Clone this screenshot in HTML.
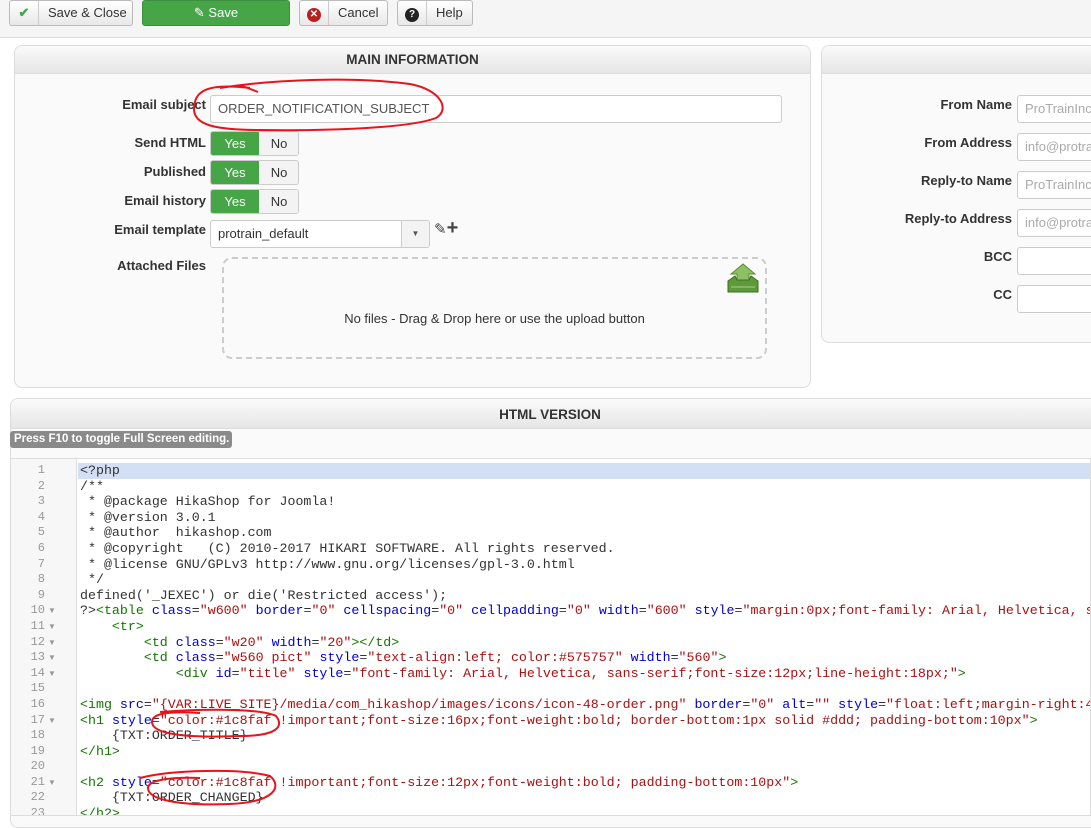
<!DOCTYPE html>
<html><head><meta charset="utf-8"><style>
*{box-sizing:border-box}
body{margin:0;width:1091px;height:816px;overflow:hidden;background:#fff;font-family:"Liberation Sans",Arial,sans-serif;font-size:13px;color:#333;position:relative}
.tb{position:absolute;left:0;top:0;width:1091px;height:38px;background:#f5f5f5;border-bottom:1px solid #ddd}
.btn{position:absolute;top:0;height:26px;border:1px solid #bbb;border-radius:3px;background:linear-gradient(#fff,#e8e8e8);font-size:13px;line-height:24px;color:#333;white-space:nowrap;overflow:hidden}
.btn .ic{display:inline-block;width:29px;height:24px;border-right:1px solid #ccc;text-align:center;vertical-align:top;font-weight:bold}
.btn span.t{padding:0 9px 0 9px}
.panel{position:absolute;background:#fafafa;border:1px solid #ddd;border-radius:8px;overflow:hidden}
.ph{height:28px;background:linear-gradient(#fafafa,#e6e6e6);border-bottom:1px solid #ddd;text-align:center;font-weight:bold;font-size:13.5px;line-height:28px;color:#333}
.lbl{position:absolute;font-weight:bold;font-size:13px;color:#333;text-align:right;white-space:nowrap}
.inp{position:absolute;height:28px;border:1px solid #ccc;border-radius:3px;background:#fff;font-size:13px;line-height:26px;padding-left:7px;color:#555;white-space:nowrap;overflow:hidden}
.yn{position:absolute;left:210px;width:89px;height:25px;border:1px solid #ccc;border-radius:3px;overflow:hidden;font-size:13px;line-height:23px}
.yn .y{position:absolute;left:0;top:0;width:48px;height:24px;background:#46a546;color:#fff;text-align:center}
.yn .n{position:absolute;left:48px;top:0;width:40px;height:24px;background:#f3f3f3;color:#333;text-align:center}
.code{position:absolute;left:10px;top:458px;width:1081px;height:358px;background:#fff;border:1px solid #ddd;overflow:hidden}
.gut{position:absolute;left:0;top:0;width:66px;height:100%;background:#f7f7f7;border-right:1px solid #ddd}
.ln{position:absolute;left:0;width:34px;text-align:right;font-family:"Liberation Mono",monospace;font-size:12px;color:#999}
.fd{position:absolute;left:37px;font-size:8px;color:#999}
.cl{position:absolute;left:69px;white-space:pre;font-family:"Liberation Mono",monospace;font-size:13.3px;line-height:15.6px;color:#333}
.g{color:#170}.b{color:#00c}.r{color:#a11}
</style></head><body>
<div class="tb">
 <div class="btn" style="left:9px;width:124px"><span class="ic" style="color:#46a546">✔</span><span class="t">Save &amp; Close</span></div>
 <div class="btn" style="left:142px;width:148px;background:#46a546;border-color:#3d8f3d;color:#fff;text-align:center">✎ Save</div>
 <div class="btn" style="left:299px;width:89px"><span class="ic"><span style="display:inline-block;width:14px;height:14px;border-radius:7px;background:#b52020;color:#fff;font-size:10px;line-height:14px;margin-top:5px">✕</span></span><span class="t">Cancel</span></div>
 <div class="btn" style="left:397px;width:76px"><span class="ic"><span style="display:inline-block;width:14px;height:14px;border-radius:7px;background:#222;color:#fff;font-size:10px;line-height:14px;margin-top:5px">?</span></span><span class="t">Help</span></div>
</div>

<div class="panel" style="left:14px;top:45px;width:797px;height:343px">
 <div class="ph">MAIN INFORMATION</div>
</div>
<div class="lbl" style="left:60px;top:97px;width:146px">Email subject</div>
<div class="inp" style="left:210px;top:95px;width:572px">ORDER_NOTIFICATION_SUBJECT</div>
<div class="lbl" style="left:60px;top:135px;width:146px">Send HTML</div>
<div class="yn" style="top:131px"><div class="y">Yes</div><div class="n">No</div></div>
<div class="lbl" style="left:60px;top:164px;width:146px">Published</div>
<div class="yn" style="top:160px"><div class="y">Yes</div><div class="n">No</div></div>
<div class="lbl" style="left:60px;top:193px;width:146px">Email history</div>
<div class="yn" style="top:189px"><div class="y">Yes</div><div class="n">No</div></div>
<div class="lbl" style="left:60px;top:222px;width:146px">Email template</div>
<div class="inp" style="left:210px;top:220px;width:220px;color:#333">protrain_default<div style="position:absolute;right:0;top:0;width:28px;height:26px;border-left:1px solid #ccc;background:#f3f3f3;text-align:center;font-size:8px;color:#555">▼</div></div>
<div style="position:absolute;left:434px;top:220px;font-size:15px;color:#444">✎<b style="font-size:20px;line-height:16px">+</b></div>
<div class="lbl" style="left:60px;top:258px;width:146px">Attached Files</div>
<div style="position:absolute;left:222px;top:257px;width:545px;height:102px;border:2px dashed #ccc;border-radius:10px;text-align:center;line-height:120px;font-size:13px;color:#333">No files - Drag &amp; Drop here or use the upload button</div>
<svg style="position:absolute;left:727px;top:263px" width="33" height="32"><polygon points="16,1 28,11 22,11 22,17 10,17 10,11 4,11" fill="#8cc063" stroke="#5a8a35"/><path d="M1,18 L8,13 L10,17 L22,17 L24,13 L31,18 L31,29 L1,29Z" fill="#5f9a3a" stroke="#3f6e22"/><line x1="4" y1="24" x2="28" y2="24" stroke="#aad08a"/></svg>

<div class="panel" style="left:821px;top:45px;width:290px;height:298px">
 <div class="ph"></div>
</div>
<div class="lbl" style="left:850px;top:97px;width:162px">From Name</div>
<div class="inp" style="left:1017px;top:95px;width:90px;color:#aaa">ProTrainInc.</div>
<div class="lbl" style="left:850px;top:135px;width:162px">From Address</div>
<div class="inp" style="left:1017px;top:133px;width:90px;color:#aaa">info@protrain</div>
<div class="lbl" style="left:850px;top:173px;width:162px">Reply-to Name</div>
<div class="inp" style="left:1017px;top:171px;width:90px;color:#aaa">ProTrainInc.</div>
<div class="lbl" style="left:850px;top:211px;width:162px">Reply-to Address</div>
<div class="inp" style="left:1017px;top:209px;width:90px;color:#aaa">info@protrain</div>
<div class="lbl" style="left:850px;top:249px;width:162px">BCC</div>
<div class="inp" style="left:1017px;top:247px;width:90px"></div>
<div class="lbl" style="left:850px;top:287px;width:162px">CC</div>
<div class="inp" style="left:1017px;top:285px;width:90px"></div>

<div class="panel" style="left:10px;top:398px;width:1100px;height:430px">
 <div class="ph" style="height:30px;line-height:32px;padding-right:20px">HTML VERSION</div>
</div>
<div style="position:absolute;left:10px;top:431px;width:222px;height:17px;background:#8a8a8a;border-radius:3px;color:#fff;font-weight:bold;font-size:11.5px;line-height:17px;padding-left:4px;white-space:nowrap;overflow:hidden">Press F10 to toggle Full Screen editing.</div>

<div class="code">
 <div class="gut"></div>
 <div style="position:absolute;left:67px;top:4px;width:1020px;height:15.6px;background:#d2dff5"></div>
<div class="ln" style="top:4px;line-height:15.6px">1<br>2<br>3<br>4<br>5<br>6<br>7<br>8<br>9<br>10<br>11<br>12<br>13<br>14<br>15<br>16<br>17<br>18<br>19<br>20<br>21<br>22<br>23</div>
<div class="fd" style="top:4px;line-height:15.6px"><br><br><br><br><br><br><br><br><br>▼<br>▼<br>▼<br>▼<br>▼<br><br><br>▼<br><br><br><br>▼<br><br></div>
<div class="cl" style="top:4px">&lt;?php
/**
 * @package HikaShop for Joomla!
 * @version 3.0.1
 * @author  hikashop.com
 * @copyright   (C) 2010-2017 HIKARI SOFTWARE. All rights reserved.
 * @license GNU/GPLv3 http://www.gnu.org/licenses/gpl-3.0.html
 */
defined('_JEXEC') or die('Restricted access');
?&gt;<span class="g">&lt;table</span> <span class="b">class</span>=<span class="r">"w600"</span> <span class="b">border</span>=<span class="r">"0"</span> <span class="b">cellspacing</span>=<span class="r">"0"</span> <span class="b">cellpadding</span>=<span class="r">"0"</span> <span class="b">width</span>=<span class="r">"600"</span> <span class="b">style</span>=<span class="r">"margin:0px;font-family: Arial, Helvetica, sans-serif"</span>
    <span class="g">&lt;tr&gt;</span>
        <span class="g">&lt;td</span> <span class="b">class</span>=<span class="r">"w20"</span> <span class="b">width</span>=<span class="r">"20"</span><span class="g">&gt;&lt;/td&gt;</span>
        <span class="g">&lt;td</span> <span class="b">class</span>=<span class="r">"w560 pict"</span> <span class="b">style</span>=<span class="r">"text-align:left; color:#575757"</span> <span class="b">width</span>=<span class="r">"560"</span><span class="g">&gt;</span>
            <span class="g">&lt;div</span> <span class="b">id</span>=<span class="r">"title"</span> <span class="b">style</span>=<span class="r">"font-family: Arial, Helvetica, sans-serif;font-size:12px;line-height:18px;"</span><span class="g">&gt;</span>

<span class="g">&lt;img</span> <span class="b">src</span>=<span class="r">"{VAR:LIVE_SITE}/media/com_hikashop/images/icons/icon-48-order.png"</span> <span class="b">border</span>=<span class="r">"0"</span> <span class="b">alt</span>=<span class="r">""</span> <span class="b">style</span>=<span class="r">"float:left;margin-right:4px"</span>
<span class="g">&lt;h1</span> <span class="b">style</span>=<span class="r">"color:#1c8faf !important;font-size:16px;font-weight:bold; border-bottom:1px solid #ddd; padding-bottom:10px"</span><span class="g">&gt;</span>
    {TXT:ORDER_TITLE}
<span class="g">&lt;/h1&gt;</span>

<span class="g">&lt;h2</span> <span class="b">style</span>=<span class="r">"color:#1c8faf !important;font-size:12px;font-weight:bold; padding-bottom:10px"</span><span class="g">&gt;</span>
    {TXT:ORDER_CHANGED}
<span class="g">&lt;/h2&gt;</span></div>
</div>

<svg style="position:absolute;left:0;top:0" width="1091" height="816" fill="none" stroke="#e8141b" stroke-width="2">
<path d="M250,88 C200,82 195,95 194,108 C193,125 215,130 260,130 C330,131 410,128 436,118 C450,110 442,90 410,84 C350,76 270,80 220,88 M240,85 L258,92"/>
<path d="M160,712 C200,709 260,708 276,716 C284,726 278,736 240,736 C190,738 152,735 152,722 C152,714 165,711 200,713"/>
<path d="M140,778 C170,770 240,768 270,776 C282,786 276,802 230,804 C180,806 148,800 148,788 C148,780 170,777 200,778"/>
</svg>
</body></html>
